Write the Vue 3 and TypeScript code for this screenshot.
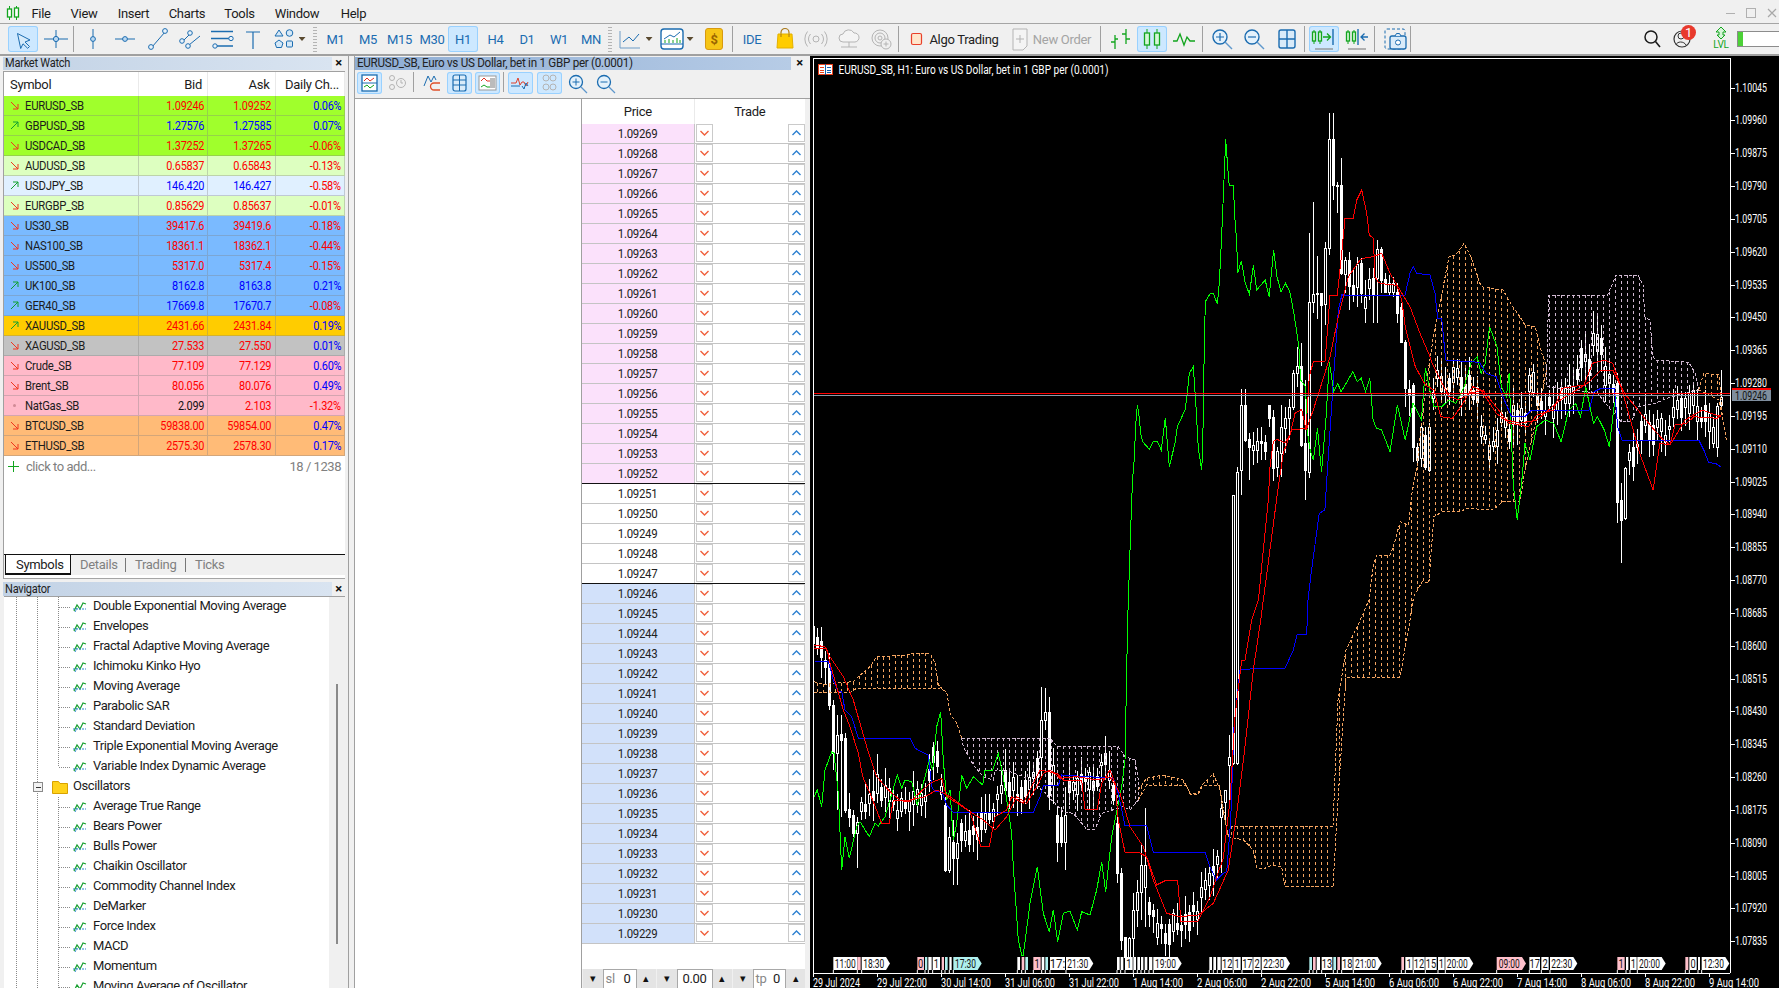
<script setup lang="ts">
type P = number[];
const B = '#1b6cb0';
const G = '#12a51e';
const L = '#b4b4b4';

interface Tool { cx: number; w: number; kind: 'icon' | 'text' | 'sep' | 'grip' | 'drop'; html?: string; text?: string; on?: boolean; cls?: string }
const ic: Record<string, string> = {
  arrow: `<path d="M9.5 7.5L22 14l-5 2 4.5 4.5-1.8 1.8L15 17.8l-2.3 4.7z" fill="#d7ebfa" stroke="${B}"/>`,
  cross: `<path d="M3 13h24M15 4v18" stroke="${B}"/><circle cx="15" cy="13" r="2.6" fill="#bcd9f2" stroke="${B}"/>`,
  vline: `<path d="M15 3v20" stroke="${B}"/><circle cx="15" cy="13" r="2.4" fill="#bcd9f2" stroke="${B}"/>`,
  hline: `<path d="M5 13h20" stroke="${B}"/><circle cx="15" cy="13" r="2.4" fill="#bcd9f2" stroke="${B}"/>`,
  trend: `<path d="M9 21L22 6" stroke="${B}"/><circle cx="8" cy="21" r="2.4" fill="#eaf3fb" stroke="${B}"/><circle cx="22" cy="5" r="2.4" fill="#eaf3fb" stroke="${B}"/>`,
  chan: `<path d="M8 15L16 7M14 19L25 10" stroke="${B}"/><circle cx="7" cy="15" r="2.3" fill="#eaf3fb" stroke="${B}"/><circle cx="15" cy="7" r="2.3" fill="#eaf3fb" stroke="${B}"/><circle cx="13" cy="20" r="2.3" fill="#eaf3fb" stroke="${B}"/>`,
  fibo: `<path d="M4 5.5h22M4 12.5h18M10 20h16" stroke="${B}" stroke-width="1.3"/><circle cx="24" cy="12.5" r="2.2" fill="#eaf3fb" stroke="${B}"/><circle cx="8" cy="20" r="2.2" fill="#eaf3fb" stroke="${B}"/>`,
  tee: `<path d="M8 6h14M15 6v17" stroke="${B}" stroke-width="1.2"/>`,
  shapes: `<path d="M10 4l4 6H6z" fill="#d5e8f7" stroke="${B}"/><circle cx="20.5" cy="7" r="3.3" fill="#d5e8f7" stroke="${B}"/><path d="M10 14l4 3-1.5 4.5h-5L6 17z" fill="#d5e8f7" stroke="${B}"/><rect x="17.5" y="15" width="6" height="6" rx="1" fill="#d5e8f7" stroke="${B}"/>`,
  linec: `<path d="M4 5v17h20" stroke="#6f9cc6"/><path d="M7 16l6-5 4 4 6-7" stroke="${B}"/>`,
  win: `<rect x="4" y="3" width="22" height="20" rx="3" fill="#fff" stroke="${B}" stroke-width="1.4"/><path d="M4 18h22" stroke="${B}"/><path d="M7 13l6-4 4 2 6-5" stroke="${B}"/><path d="M8 17v-3M12 17v-4M16 17v-3M20 17v-5M23 17v-3" stroke="${G}"/>`,
  bag: `<path d="M11 9V6.500a4 4 0 0 1 8 0V9" stroke="#a87818" stroke-width="1.200"/><path d="M8 8h14l1 14H7z" fill="#ffcc00" stroke="#e3b000"/><path d="M11 8v3M19 8v3" stroke="#a87818"/>`,
  sig: `<circle cx="15" cy="13" r="3" stroke="${L}"/><path d="M9.5 8a8 8 0 0 0 0 10M20.500 8a8 8 0 0 1 0 10M6.500 5.500a12 12 0 0 0 0 15M23.500 5.500a12 12 0 0 1 0 15" stroke="${L}"/>`,
  cloud: `<path d="M9 16a4 4 0 0 1 0-8 6 6 0 0 1 11-1 4.500 4.500 0 0 1 1 9z" stroke="${L}" fill="#f4f4f4"/><path d="M15 16v5M7 21h16" stroke="${L}"/>`,
  vps: `<circle cx="14" cy="12" r="8" stroke="${L}"/><circle cx="14" cy="12" r="5" stroke="${L}"/><circle cx="14" cy="12" r="2" stroke="${L}"/><circle cx="20" cy="18" r="5" fill="#f0f0f0" stroke="${L}"/><path d="M17.500 18h5M20 15.500v5" stroke="${L}"/>`,
  algo: `<rect x="2.500" y="7.500" width="10" height="11" rx="1.500" fill="#ffe6cc" stroke="#e9402a" stroke-width="1.200"/>`,
  order: `<path d="M8 3h14v17l-4 4H8z" fill="#f4f4f4" stroke="${L}"/><path d="M15 9v8M11 13h8" stroke="${L}"/>`,
  bars: `<path d="M9 9v14M5 16h4M9 13h3M20 3v15M16 8h4M20 13h4" stroke="${G}" stroke-width="1.300"/>`,
  candles: `<path d="M10 3v20M20 3v20" stroke="${G}"/><rect x="7.500" y="7" width="5" height="12" fill="#d7f5d9" stroke="${G}" stroke-width="1.300"/><rect x="17.500" y="7" width="5" height="12" fill="#d7f5d9" stroke="${G}" stroke-width="1.300"/>`,
  linez: `<path d="M4 15h4l3-7 4 11 3-8 3 4h5" stroke="${G}" stroke-width="1.300"/>`,
  zin: `<circle cx="13" cy="11" r="7" fill="#e4f1fb" stroke="${B}" stroke-width="1.400"/><path d="M9 11h8M13 7v8" stroke="${B}" stroke-width="1.200"/><path d="M18 16l7 7" stroke="#5e97cc" stroke-width="1.400"/>`,
  zout: `<circle cx="13" cy="11" r="7" fill="#e4f1fb" stroke="${B}" stroke-width="1.400"/><path d="M9 11h8" stroke="${B}" stroke-width="1.200"/><path d="M18 16l7 7" stroke="#5e97cc" stroke-width="1.400"/>`,
  tile: `<rect x="7" y="4" width="16" height="18" rx="2" fill="#d9ebf9" stroke="${B}" stroke-width="1.400"/><path d="M15 4v18M7 13h16" stroke="${B}" stroke-width="1.400"/>`,
  auto: `<path d="M5 4v14M11 4v14" stroke="${G}"/><rect x="3.500" y="6" width="3" height="9" fill="#d7f5d9" stroke="${G}" stroke-width="1.300"/><rect x="9.500" y="6" width="3" height="9" fill="#d7f5d9" stroke="${G}" stroke-width="1.300"/><path d="M14 11h7M18 7.500l3.500 3.500-3.500 3.500" stroke="${G}" stroke-width="1.300"/><path d="M24 3v16" stroke="${B}" stroke-width="1.400"/><path d="M6 23h18" stroke="#8f8f8f" stroke-width="1.300"/>`,
  shift: `<path d="M6 4v14M12 4v14" stroke="${G}"/><rect x="4.500" y="6" width="3" height="9" fill="#d7f5d9" stroke="${G}" stroke-width="1.300"/><rect x="10.500" y="6" width="3" height="9" fill="#d7f5d9" stroke="${G}" stroke-width="1.300"/><path d="M16 3v16" stroke="${B}" stroke-width="1.400"/><path d="M26 11h-7M22.500 7.500L19 11l3.500 3.500" stroke="${B}" stroke-width="1.300"/><path d="M6 23h18" stroke="#8f8f8f" stroke-width="1.300"/>`,
  cam: `<rect x="5" y="3" width="20" height="20" rx="2" stroke="${B}" stroke-dasharray="3 2"/><rect x="10" y="10" width="16" height="13" rx="2" fill="#d9ebf9" stroke="${B}" stroke-width="1.300"/><circle cx="18" cy="16.500" r="2.500" fill="#fff" stroke="${B}"/><path d="M15 10l1.500-2.500h3L21 10" fill="#d9ebf9" stroke="${B}"/>`,
  search: `<circle cx="14" cy="11" r="6" stroke="#1a1a1a" stroke-width="1.500"/><path d="M18.500 15.500L23 21" stroke="#1a1a1a" stroke-width="1.600"/>`,
  user: `<circle cx="15" cy="13" r="8" stroke="#333" stroke-width="1.200"/><circle cx="14" cy="10" r="3" stroke="#333"/><path d="M9 19c1-4 8-4 10 0" stroke="#333"/>`,
  lvl: `<path d="M15 1l5 5h-3v3h2l-4 4-4-4h2V6H10z" fill="#d7f5d9" stroke="${G}"/>`,
};

const raw: Tool[] = [
  { cx: 23, w: 30, kind: 'icon', html: ic.arrow, on: true }, { cx: 55.500, w: 30, kind: 'icon', html: ic.cross },
  { cx: 73.500, w: 1, kind: 'sep' }, { cx: 93, w: 30, kind: 'icon', html: ic.vline }, { cx: 125, w: 30, kind: 'icon', html: ic.hline },
  { cx: 158, w: 30, kind: 'icon', html: ic.trend }, { cx: 189.500, w: 30, kind: 'icon', html: ic.chan }, { cx: 222, w: 30, kind: 'icon', html: ic.fibo },
  { cx: 253, w: 30, kind: 'icon', html: ic.tee }, { cx: 284, w: 30, kind: 'icon', html: ic.shapes }, { cx: 302, w: 7, kind: 'drop' }, { cx: 314.500, w: 4, kind: 'grip' },
  { cx: 335.500, w: 30, kind: 'text', text: 'M1' }, { cx: 368, w: 30, kind: 'text', text: 'M5' }, { cx: 399.500, w: 30, kind: 'text', text: 'M15' }, { cx: 432, w: 30, kind: 'text', text: 'M30' },
  { cx: 463, w: 30, kind: 'text', text: 'H1', on: true }, { cx: 495.500, w: 30, kind: 'text', text: 'H4' }, { cx: 527, w: 30, kind: 'text', text: 'D1' }, { cx: 559, w: 30, kind: 'text', text: 'W1' }, { cx: 591, w: 30, kind: 'text', text: 'MN' },
  { cx: 609.500, w: 4, kind: 'grip' }, { cx: 631, w: 30, kind: 'icon', html: ic.linec }, { cx: 649, w: 7, kind: 'drop' }, { cx: 671.500, w: 30, kind: 'icon', html: ic.win }, { cx: 690, w: 7, kind: 'drop' },
  { cx: 714, w: 18, kind: 'text', text: '$', cls: 'dollar' }, { cx: 732.500, w: 1, kind: 'sep' }, { cx: 752, w: 26, kind: 'text', text: 'IDE' }, { cx: 785, w: 30, kind: 'icon', html: ic.bag },
  { cx: 816, w: 30, kind: 'icon', html: ic.sig }, { cx: 849, w: 30, kind: 'icon', html: ic.cloud }, { cx: 881, w: 30, kind: 'icon', html: ic.vps }, { cx: 898.500, w: 1, kind: 'sep' },
  { cx: 916.500, w: 15, kind: 'icon', html: ic.algo }, { cx: 964, w: 70, kind: 'text', text: 'Algo Trading', cls: 'label' },
  { cx: 1020, w: 30, kind: 'icon', html: ic.order }, { cx: 1062, w: 58, kind: 'text', text: 'New Order', cls: 'label off' }, { cx: 1100.500, w: 1, kind: 'sep' },
  { cx: 1120.500, w: 30, kind: 'icon', html: ic.bars }, { cx: 1152, w: 30, kind: 'icon', html: ic.candles, on: true }, { cx: 1184, w: 30, kind: 'icon', html: ic.linez }, { cx: 1202, w: 1, kind: 'sep' },
  { cx: 1222, w: 30, kind: 'icon', html: ic.zin }, { cx: 1254, w: 30, kind: 'icon', html: ic.zout }, { cx: 1287, w: 30, kind: 'icon', html: ic.tile }, { cx: 1304, w: 1, kind: 'sep' },
  { cx: 1324, w: 30, kind: 'icon', html: ic.auto, on: true }, { cx: 1357, w: 30, kind: 'icon', html: ic.shift }, { cx: 1374, w: 1, kind: 'sep' }, { cx: 1395, w: 30, kind: 'icon', html: ic.cam }, { cx: 1410.500, w: 1, kind: 'sep' },
  { cx: 1652, w: 30, kind: 'icon', html: ic.search },
];
let edge = 0;
const tools = raw.map((t) => { const ml = t.cx - t.w / 2 - edge; edge = t.cx + t.w / 2; return { ...t, ml }; });

const menus = [['File', 41], ['View', 84], ['Insert', 133.5], ['Charts', 187], ['Tools', 239.5], ['Window', 297], ['Help', 353.5]] as const;
const menuItems = (() => { let e = 21; return menus.map(([t, c]) => { const w = 50; const ml = c - w / 2 - e; e = c + w / 2; return { t, w, ml }; }); })();

const subTools = [
  { w: 25, on: true, html: `<rect x="5" y="3" width="15" height="16" fill="#fff" stroke="${B}" stroke-width="1.300"/><path d="M5 11h15" stroke="${B}"/><path d="M7 9l3-3 3 3 4-3" stroke="#e03020"/><path d="M7 15l3-2 3 3 4-3" stroke="${G}"/>` },
  { w: 25, m: 3, html: `<circle cx="7" cy="6" r="2.500" stroke="${L}"/><circle cx="7" cy="15" r="2.500" stroke="${L}"/><circle cx="16" cy="11" r="4.500" stroke="${L}"/><path d="M16 8v3h2" stroke="${L}"/>` },
  { w: 1, sep: true, m: 3 },
  { w: 25, m: 6, html: `<path d="M4 14l4-10 3 6 3-6 2 4" stroke="${B}"/><path d="M20 11h-6a3.500 3.500 0 0 0 0 7h6" stroke="#e0502a" stroke-width="1.300"/>` },
  { w: 25, m: 2, on: true, html: `<rect x="6" y="3" width="13" height="16" rx="2" fill="#d9ebf9" stroke="${B}" stroke-width="1.200"/><path d="M6 8h13M6 13h13M12.500 3v16" stroke="${B}"/>` },
  { w: 25, m: 3, on: true, html: `<rect x="4" y="4" width="17" height="14" fill="#fff" stroke="#999"/><path d="M6 9l3-3 3 3h3" stroke="#e03020"/><path d="M6 15l3-2 3 2h3" stroke="${G}"/><rect x="15" y="6" width="5" height="10" fill="#bbb"/>` },
  { w: 1, sep: true, m: 3 },
  { w: 25, m: 4, on: true, html: `<path d="M3 11h5l2-5 2 7 2-3h2l2 4 2-4" stroke="#e0402a"/><path d="M3 14h9M14 14l2 3 2-6 2 3" stroke="${B}"/>` },
  { w: 25, m: 4, on: true, html: `<circle cx="9" cy="6" r="3" stroke="${L}"/><circle cx="9" cy="15" r="3" stroke="${L}"/><circle cx="16" cy="6" r="3" stroke="${L}"/><circle cx="16" cy="15" r="3" stroke="${L}"/>` },
  { w: 25, m: 3, html: `<circle cx="11" cy="10" r="6.500" fill="#e4f1fb" stroke="${B}" stroke-width="1.300"/><path d="M7.500 10h7M11 6.500v7" stroke="${B}"/><path d="M16 15l6 6" stroke="#5e97cc" stroke-width="1.300"/>` },
  { w: 25, m: 3, html: `<circle cx="11" cy="10" r="6.500" fill="#e4f1fb" stroke="${B}" stroke-width="1.300"/><path d="M7.500 10h7" stroke="${B}"/><path d="M16 15l6 6" stroke="#5e97cc" stroke-width="1.300"/>` },
];

const RED = '#ff0000', BLU = '#0000ff', BLK = '#111';
const GRN = '#a0ff2c', PGR = '#ddffc0', PBL = '#e0f0ff', SKY = '#7abaff', GLD = '#ffcc00', GRY = '#c2c2c2', PNK = '#ffb9c9', ORG = '#ffbb77';
const rows = [
  ['EURUSD_SB', 'd', '1.09246', '1.09252', '0.06%', GRN, RED, RED],
  ['GBPUSD_SB', 'u', '1.27576', '1.27585', '0.07%', GRN, BLU, BLU],
  ['USDCAD_SB', 'd', '1.37252', '1.37265', '-0.06%', GRN, RED, RED],
  ['AUDUSD_SB', 'd', '0.65837', '0.65843', '-0.13%', PGR, RED, RED],
  ['USDJPY_SB', 'u', '146.420', '146.427', '-0.58%', PBL, BLU, BLU],
  ['EURGBP_SB', 'd', '0.85629', '0.85637', '-0.01%', PGR, RED, RED],
  ['US30_SB', 'd', '39417.6', '39419.6', '-0.18%', SKY, RED, RED],
  ['NAS100_SB', 'd', '18361.1', '18362.1', '-0.44%', SKY, RED, RED],
  ['US500_SB', 'd', '5317.0', '5317.4', '-0.15%', SKY, RED, RED],
  ['UK100_SB', 'u', '8162.8', '8163.8', '0.21%', SKY, BLU, BLU],
  ['GER40_SB', 'u', '17669.8', '17670.7', '-0.08%', SKY, BLU, BLU],
  ['XAUUSD_SB', 'u', '2431.66', '2431.84', '0.19%', GLD, RED, RED],
  ['XAGUSD_SB', 'd', '27.533', '27.550', '0.01%', GRY, RED, RED],
  ['Crude_SB', 'd', '77.109', '77.129', '0.60%', PNK, RED, RED],
  ['Brent_SB', 'd', '80.056', '80.076', '0.49%', PNK, RED, RED],
  ['NatGas_SB', 'n', '2.099', '2.103', '-1.32%', PNK, BLK, RED],
  ['BTCUSD_SB', 'd', '59838.00', '59854.00', '0.47%', ORG, RED, RED],
  ['ETHUSD_SB', 'd', '2575.30', '2578.30', '0.17%', ORG, RED, RED],
].map((r) => ({ sym: r[0], dir: r[1], bid: r[2], ask: r[3], chg: r[4], bg: r[5], bc: r[6], ac: r[7], cc: r[4].startsWith('-') ? RED : BLU }));

const navTop = ['Double Exponential Moving Average', 'Envelopes', 'Fractal Adaptive Moving Average', 'Ichimoku Kinko Hyo', 'Moving Average', 'Parabolic SAR', 'Standard Deviation', 'Triple Exponential Moving Average', 'Variable Index Dynamic Average'];
const navOsc = ['Average True Range', 'Bears Power', 'Bulls Power', 'Chaikin Oscillator', 'Commodity Channel Index', 'DeMarker', 'Force Index', 'MACD', 'Momentum', 'Moving Average of Oscillator'];

const domRows = Array.from({ length: 41 }, (_, i) => ({
  price: (1.09269 - i * 0.00001).toFixed(5),
  cls: i < 18 ? 'ask' : i < 23 ? 'mid' : 'bid',
  sep: i === 17 || i === 22,
}));

// ---------- chart data ----------
const zoomMap = (ox: number, oy: number, fx: number) => (pts: P[]): P[] => pts.map(([x, y]) => [ox + x / fx, oy + y / 3]);
const z7 = zoomMap(810, 620, 3), z8 = zoomMap(1200, 60, 3), z6 = zoomMap(1250, 200, 2.964), z10 = zoomMap(1100, 120, 3);
const d = (p: P[]) => 'M' + p.map((q) => q[0].toFixed(1) + ' ' + q[1].toFixed(1)).join('L');

const green = d([
  ...z7([[12, 530], [22, 510], [35, 560], [45, 450], [65, 395], [72, 400], [85, 520], [95, 750], [105, 650], [118, 715], [140, 620], [150, 605], [178, 650], [195, 610], [205, 618], [225, 590], [240, 540], [262, 465], [275, 505], [285, 480], [305, 485], [322, 555], [340, 490], [358, 420], [368, 450], [380, 320], [392, 275], [400, 420], [410, 540], [420, 510], [430, 660], [440, 610], [455, 465], [470, 505], [490, 470], [518, 495], [525, 450], [548, 450], [565, 400], [580, 470], [605, 640], [610, 740], [625, 960], [635, 1005], [640, 1005], [660, 850], [682, 740], [700, 880], [718, 935], [730, 870], [743, 965], [760, 880], [780, 873], [802, 930], [815, 875], [840, 885], [860, 810], [875, 725], [887, 815], [905, 650], [935, 500], [945, 420], [950, 150], [953, 0]]),
  ...z10([[95, 1140], [98, 1075], [104, 1000], [106, 930], [112, 855], [116, 880], [122, 940], [128, 965], [148, 988], [160, 965], [172, 965], [184, 990], [196, 893], [200, 945], [208, 1040], [225, 970], [232, 920], [255, 870], [262, 820], [268, 760], [280, 740], [288, 860], [295, 985], [305, 1050], [308, 985], [312, 735], [316, 545], [330, 522], [340, 520], [352, 552], [358, 490], [365, 345], [372, 180], [377, 58], [380, 100], [386, 180], [388, 195], [400, 195], [405, 300], [410, 365], [413, 460], [424, 422], [436, 490], [448, 522]]),
  ...z6([[0, 270], [10, 195], [20, 270], [45, 240], [57, 290], [70, 150], [80, 230], [92, 275], [105, 250], [118, 275], [130, 340], [145, 440], [150, 540], [165, 560], [168, 680], [178, 750], [188, 780], [200, 685], [212, 815], [225, 660], [235, 485], [248, 575], [260, 550], [270, 575], [305, 515], [318, 545], [330, 535], [342, 575], [355, 535], [365, 660], [375, 685], [390, 690], [415, 755], [437, 615], [460, 720], [483, 610], [508, 660], [520, 505], [535, 580], [545, 620], [568, 620], [590, 600], [610, 610], [635, 560], [655, 490], [673, 470], [685, 520], [697, 490], [710, 380], [732, 440], [745, 560], [760, 590], [768, 520], [780, 850], [792, 960], [805, 850], [815, 730], [830, 780], [850, 680], [875, 660], [900, 670], [922, 725], [945, 630], [965, 610], [980, 650], [995, 560], [1018, 670], [1030, 650], [1050, 690], [1065, 740], [1080, 610], [1088, 590]]),
]);
const redA = d([
  ...z7([[12, 85], [50, 85], [60, 130], [100, 270], [120, 320], [145, 400], [158, 470], [180, 520], [215, 610], [238, 610], [250, 540], [300, 545], [360, 490], [395, 475], [410, 530], [450, 555], [480, 575], [500, 640], [513, 680], [538, 680], [555, 590], [590, 570], [605, 530], [640, 550], [690, 450], [740, 460], [760, 480], [815, 480], [825, 568], [862, 568], [875, 490], [900, 450], [915, 490], [925, 600], [945, 697], [985, 697], [1010, 710], [1040, 795], [1065, 782], [1103, 782], [1113, 905], [1163, 905], [1200, 830], [1220, 770], [1240, 715], [1260, 540], [1275, 290], [1295, 120], [1305, 120], [1325, 0]]),
  ...z6([[25, 1200]]),
  ...z10([[505, 1140], [510, 1040], [520, 965], [530, 958], [555, 968], [570, 945], [585, 880], [605, 868], [618, 930], [628, 770], [640, 725], [675, 725], [685, 600], [690, 525], [712, 525], [725, 400], [735, 295], [760, 295]]),
  ...z8([[470, 420], [485, 390], [500, 460], [508, 525], [520, 535], [525, 650], [535, 668], [555, 672], [590, 676]]),
  ...z6([[450, 300], [460, 380], [490, 500], [520, 555], [545, 570], [565, 650], [600, 655], [625, 620], [660, 560], [685, 570], [730, 640], [770, 670], [825, 680], [850, 645], [900, 630], [925, 565], [990, 555], [1015, 490], [1050, 480], [1075, 490], [1100, 560], [1155, 760], [1195, 870], [1215, 730], [1245, 735], [1260, 675], [1295, 670], [1315, 650], [1385, 655], [1395, 645]]),
]);
const redB = d([
  ...z7([[12, 75], [45, 80], [60, 110], [100, 170], [130, 240], [170, 380], [200, 470], [240, 515], [270, 540], [300, 540], [345, 530], [380, 510], [420, 530], [480, 575], [520, 600], [555, 630], [590, 590], [620, 530], [650, 550], [680, 500], [700, 460], [720, 450], [750, 475], [800, 470], [860, 480], [900, 470], [930, 520], [960, 620], [1000, 680], [1030, 780], [1070, 880], [1110, 890], [1165, 885], [1210, 850], [1255, 750], [1280, 580], [1305, 380], [1330, 150], [1352, 0]]),
  ...z10([[535, 1100], [550, 1000], [575, 930], [620, 925], [640, 870], [665, 790], [690, 710], [715, 590], [745, 470]]),
  ...z8([[480, 600], [490, 595], [520, 590], [545, 580], [570, 640], [600, 690], [630, 740], [660, 820], [690, 890]]),
  ...z6([[540, 490], [590, 590], [620, 600], [650, 580], [690, 570], [760, 660], [800, 670], [850, 660], [920, 600], [1000, 550], [1040, 510], [1075, 510], [1110, 580], [1150, 630], [1190, 680], [1220, 715], [1245, 735], [1290, 660], [1340, 630], [1395, 650]]),
]);
const blue = d([
  ...z7([[15, 123], [55, 123], [70, 180], [85, 215], [95, 215], [105, 270], [125, 290], [145, 355], [300, 355], [315, 385], [355, 405], [365, 500], [375, 515], [395, 515], [410, 555], [430, 577], [670, 577], [690, 530], [700, 497], [745, 497], [755, 465], [910, 475], [925, 520], [945, 617], [1010, 617], [1030, 697], [1185, 697], [1200, 740], [1220, 780], [1240, 760], [1250, 755], [1262, 600], [1272, 320], [1290, 150], [1340, 145], [1425, 145], [1450, 90], [1462, 43], [1490, 43]]),
  ...z6([[172, 1200], [180, 1130], [205, 940], [222, 930], [230, 800], [250, 500], [262, 330], [272, 285]]),
  ...z8([[615, 706], [630, 640], [640, 620], [650, 640], [690, 645], [705, 700], [713, 775], [725, 775], [737, 900]]),
  ...z6([[680, 487], [700, 520], [730, 530], [750, 590], [775, 650], [815, 650], [835, 630], [1005, 630], [1020, 575], [1040, 565], [1080, 565], [1090, 680], [1103, 720], [1330, 720], [1345, 750], [1360, 788], [1380, 790], [1395, 800]]),
]);

const interp = (p: P[], x: number) => {
  if (x <= p[0][0]) return p[0][1];
  for (let i = 1; i < p.length; i++) if (x <= p[i][0]) {
    const a = p[i - 1], b = p[i];
    return a[1] + (b[1] - a[1]) * (x - a[0]) / Math.max(b[0] - a[0], 0.001);
  }
  return p[p.length - 1][1];
};
const ORANGE = '#f4a460', THIS = '#d0b8d0';
const cloud = (top: P[], bot: P[], color: string) => {
  let cols = '';
  const x0 = Math.max(top[0][0], bot[0][0]), x1 = Math.min(top[top.length - 1][0], bot[bot.length - 1][0]);
  for (let x = Math.ceil(x0 / 6) * 6 + 1; x < x1; x += 6) {
    const a = interp(top, x), b = interp(bot, x);
    if (b - a > 3) cols += `M${x} ${a.toFixed(1)}V${b.toFixed(1)}`;
  }
  return { color, cols, edge: d(top) + d(bot) };
};
const clouds = [
  cloud(z7([[12, 185], [50, 195], [60, 190], [130, 185], [145, 170], [180, 140], [200, 110], [240, 110], [250, 105], [290, 105], [310, 100], [360, 100], [375, 130], [385, 195], [400, 210]]), z7([[12, 218], [120, 218], [140, 205], [385, 205], [400, 210]]), ORANGE),
  cloud(z7([[400, 210], [410, 215], [420, 280], [440, 310], [455, 355]]), z7([[400, 210], [410, 215], [420, 280], [440, 310], [455, 355]]), ORANGE),
  cloud(z7([[455, 355], [720, 355], [740, 378], [925, 380], [945, 410], [975, 420], [985, 480], [985, 540]]), z7([[455, 355], [460, 380], [490, 435], [520, 470], [550, 480], [555, 450], [600, 455], [640, 470], [680, 495], [735, 550], [760, 575], [790, 580], [815, 610], [830, 628], [855, 628], [875, 580], [940, 560], [960, 570], [985, 540]]), THIS),
  cloud(z7([[985, 510], [1010, 475], [1060, 465], [1120, 480], [1140, 520], [1165, 520], [1175, 495], [1210, 462], [1230, 510], [1240, 580], [1255, 650]]), z7([[985, 540], [1010, 495], [1130, 497], [1140, 522], [1165, 522], [1178, 497], [1228, 497], [1255, 650]]), ORANGE),
  cloud(z7([[1255, 650], [1262, 618], [1569, 618]]), z7([[1255, 650], [1300, 660], [1330, 690], [1340, 745], [1365, 745], [1385, 735], [1415, 740], [1425, 800], [1569, 800]]), ORANGE),
  cloud([[1333, 826], [1338, 700], [1346, 650], [1358, 625], [1369, 600], ...z6([[365, 1100], [375, 1065], [415, 1065], [425, 1040], [445, 965], [470, 975], [480, 880], [495, 800], [510, 650], [530, 500], [545, 400], [565, 300], [590, 170], [610, 165], [635, 130], [655, 170], [685, 260], [750, 270], [775, 315], [800, 350], [815, 375], [845, 380], [865, 460], [880, 500]])],
    [[1333, 886], [1338, 800], [1346, 677], [1400, 677], [1410, 620], ...z6([[485, 1190], [510, 1145], [530, 1150], [545, 950], [570, 935], [625, 935], [640, 925], [720, 930], [750, 905], [800, 905], [815, 810], [870, 560], [880, 500]])], ORANGE),
  cloud(z6([[880, 500], [885, 285], [1060, 285], [1085, 225], [1150, 225], [1165, 255], [1170, 350], [1185, 360], [1195, 470], [1200, 480], [1300, 487], [1320, 520], [1330, 570]]), z6([[880, 500], [880, 560], [1030, 580], [1070, 630], [1100, 665], [1130, 665], [1150, 620], [1200, 610], [1250, 590], [1330, 570]]), THIS),
  cloud(z6([[1330, 570], [1345, 520], [1390, 525], [1395, 580], [1400, 650], [1412, 720]]), z6([[1330, 570], [1390, 600], [1400, 650], [1412, 720]]), ORANGE),
];

// candles: X, high, low, top, bottom, filled
type C = [number, number, number, number, number, number];
const snap = (x: number) => Math.round((x - 1) / 4) * 4 + 1;
const fromZ = (m: (p: P[]) => P[], list: number[][]): C[] => list.map(([x, hi, lo, t, b, f]) => {
  const [[X, H], [, Lo], [, T], [, Bo]] = m([[x, hi], [x, lo], [x, t], [x, b]]);
  return [snap(X), H, Lo, T, Bo, f];
});
const explicit: C[] = [
  ...fromZ(z7, [[21, 25, 105, 50, 85, 1], [57, 100, 270, 130, 255, 1], [69, 240, 450, 255, 400, 1], [81, 285, 570, 345, 400, 0], [93, 285, 590, 342, 360, 1], [105, 340, 580, 355, 570, 1], [117, 520, 620, 568, 590, 1], [129, 570, 650, 585, 640, 1], [141, 590, 745, 605, 640, 0],
    [405, 530, 755, 555, 750, 1], [417, 620, 760, 650, 750, 0], [429, 600, 795, 665, 715, 1], [441, 640, 795, 670, 715, 0],
    [693, 200, 470, 300, 410, 0], [705, 205, 330, 275, 300, 0], [717, 230, 570, 275, 525, 1],
    [741, 560, 725, 585, 665, 1], [753, 560, 680, 590, 665, 1], [765, 500, 750, 585, 665, 0],
    [921, 580, 790, 610, 760, 1], [933, 745, 990, 760, 960, 1], [945, 950, 1030, 950, 1010, 1], [957, 950, 1030, 955, 1010, 0], [969, 820, 1010, 870, 955, 0], [981, 780, 920, 815, 870, 0], [993, 675, 900, 735, 815, 0], [1005, 565, 920, 735, 800, 0],
    [1233, 540, 760, 565, 590, 0], [1245, 510, 600, 510, 545, 0], [1257, 345, 540, 410, 435, 0], [1269, -375, 435, -375, 430, 0]]),
  ...fromZ(z10, [[412, 1040, 1935, 1055, 1930, 0], [424, 808, 1125, 855, 1050, 0], [436, 808, 965, 855, 960, 1], [448, 940, 1080, 958, 980, 1], [460, 935, 1035, 975, 990, 0], [472, 925, 1030, 964, 990, 0], [484, 920, 1020, 963, 968, 1], [496, 945, 1020, 965, 992, 1], [508, 855, 920, 855, 893, 1], [520, 870, 1082, 890, 1045, 1], [532, 982, 1070, 992, 1042, 0], [544, 855, 1070, 920, 1000, 0], [556, 860, 1000, 895, 925, 0], [568, 838, 960, 862, 895, 0], [580, 750, 870, 760, 862, 0], [592, 680, 800, 738, 760, 0], [604, 670, 980, 738, 975, 1], [616, 780, 1140, 970, 1050, 1], [628, 340, 1075, 545, 1055, 0], [640, 247, 580, 522, 545, 0], [652, 408, 598, 518, 522, 1], [664, 520, 738, 520, 555, 1], [676, 365, 615, 385, 552, 0], [688, -20, 405, 58, 385, 0], [700, -20, 240, 58, 195, 1], [712, 185, 280, 194, 197, 1], [724, 115, 465, 195, 460, 1], [736, 410, 520, 420, 463, 0], [748, 395, 570, 420, 498, 1], [760, 450, 545, 495, 525, 1]]),
  ...fromZ(z8, [[472, 590, 740, 612, 680, 0], [484, 595, 730, 610, 700, 1], [496, 660, 790, 712, 745, 0], [508, 625, 720, 658, 685, 0], [520, 625, 790, 655, 705, 1], [532, 540, 790, 567, 655, 0], [544, 560, 700, 567, 660, 1], [556, 640, 700, 657, 695, 1], [568, 645, 705, 670, 695, 0], [580, 650, 710, 668, 695, 0], [592, 670, 790, 695, 760, 1], [604, 730, 850, 740, 845, 1], [616, 820, 900, 843, 900, 1]]),
  ...fromZ(z6, [[460, 420, 620, 425, 565, 1], [485, 550, 785, 555, 740, 1], [497, 730, 790, 740, 780, 1], [510, 675, 800, 680, 775, 0], [520, 680, 810, 705, 800, 1], [532, 670, 815, 680, 810, 0],
    [1090, 520, 970, 550, 905, 1], [1102, 850, 1090, 900, 960, 1], [1114, 800, 960, 805, 955, 0], [1385, 610, 770, 617, 740, 0], [1397, 510, 620, 590, 615, 0]]),
];
const mid: P[] = [
  ...z7([[15, 60], [50, 150], [60, 230], [75, 330], [105, 450], [120, 570], [135, 610], [160, 560], [180, 510], [210, 510], [240, 530], [265, 570], [290, 565], [320, 520], [350, 530], [365, 430], [385, 390], [405, 640], [430, 690], [455, 640], [490, 630], [520, 610], [550, 580], [575, 500], [600, 490], [630, 530], [660, 480], [690, 420], [715, 400], [735, 520], [750, 620], [770, 530], [800, 490], [830, 490], [860, 480], [885, 420], [910, 520], [925, 680], [935, 860], [950, 980], [970, 880], [990, 820], [1005, 800], [1020, 880], [1040, 920], [1060, 940], [1090, 910], [1130, 900], [1165, 860], [1190, 770], [1220, 720], [1240, 540]]),
  ...z6([[438, 310], [450, 370], [460, 490], [472, 590], [483, 680], [495, 760], [510, 750], [530, 760], [545, 550], [555, 520], [565, 570], [580, 570], [590, 560], [605, 530], [615, 520], [627, 570], [650, 550], [672, 580], [685, 680], [697, 720], [712, 740], [735, 730], [745, 660], [770, 690], [780, 650], [792, 640], [805, 620], [818, 640], [828, 560], [840, 550], [852, 610], [875, 620], [890, 610], [910, 620], [925, 590], [945, 570], [960, 550], [970, 510], [980, 480], [995, 490], [1005, 490], [1020, 410], [1040, 430], [1052, 510], [1075, 540], [1090, 760], [1125, 760], [1138, 750], [1150, 740], [1160, 680], [1175, 680], [1195, 710], [1207, 680], [1220, 680], [1232, 710], [1245, 690], [1255, 650], [1268, 620], [1280, 640], [1303, 590], [1315, 610], [1327, 650], [1350, 660], [1362, 680], [1372, 720]]),
];
let seed = 12345;
const rnd = () => { seed = (seed * 16807) % 2147483647; return seed / 2147483647; };
const map = new Map<number, C>(explicit.map((c) => [c[0], c]));
for (let X = 813; X <= 1721; X += 4) {
  if (map.has(X) || (X > 1226 && X < 1408)) continue;
  const m = interp(mid, X) + (rnd() - 0.5) * 14;
  const h = 3 + rnd() * 17;
  map.set(X, [X, m - h / 2 - 4 - rnd() * 18, m + h / 2 + 4 + rnd() * 18, m - h / 2, m + h / 2, rnd() > 0.55 ? 1 : 0]);
}
let wicks = '', solid = '', hollow = '';
map.forEach(([X, hi, lo, t, b, f]) => {
  wicks += `M${X + 0.5} ${hi.toFixed(0)}V${lo.toFixed(0)}`;
  const body = `M${X - 0.5} ${Math.round(t) + 0.5}h2V${Math.round(Math.max(b, t + 1)) + 0.5}h-2z`;
  if (f) solid += body; else hollow += body;
});

const yLabels = ['1.10045', '1.09960', '1.09875', '1.09790', '1.09705', '1.09620', '1.09535', '1.09450', '1.09365', '1.09280', '1.09195', '1.09110', '1.09025', '1.08940', '1.08855', '1.08770', '1.08685', '1.08600', '1.08515', '1.08430', '1.08345', '1.08260', '1.08175', '1.08090', '1.08005', '1.07920', '1.07835'].map((t, i) => ({ t, y: Math.round(87.6 + i * 32.83) }));
const xLabels = ['29 Jul 2024', '29 Jul 22:00', '30 Jul 14:00', '31 Jul 06:00', '31 Jul 22:00', '1 Aug 14:00', '2 Aug 06:00', '2 Aug 22:00', '5 Aug 14:00', '6 Aug 06:00', '6 Aug 22:00', '7 Aug 14:00', '8 Aug 06:00', '8 Aug 22:00', '9 Aug 14:00'].map((t, i) => ({ t, x: 813 + i * 64, w: t === '29 Jul 2024' ? 47 : 50 }));

const W = '#ffffff', Pk = '#ffc0cb', Cy = '#aff0ee';
const tagsRaw: [number, number, string, string, boolean][] = [
  [70, 142, W, '11:00', false], [142, 152, Pk, '', false], [155, 240, W, '18:30', true],
  [322, 342, Pk, '0', false], [345, 352, Cy, '', false], [355, 365, W, '', false], [368, 390, W, '1', false], [395, 402, Pk, '', false], [405, 413, Cy, '', false], [418, 425, W, '', false], [430, 515, Cy, '17:30', true],
  [622, 630, W, '', false], [635, 643, Pk, '', false], [646, 654, Cy, '', false], [670, 692, Pk, '1', false], [695, 703, W, '', false], [706, 714, Cy, '', false], [720, 765, W, '17:', false], [768, 850, W, '21:30', true],
  [921, 929, W, '', false], [932, 940, W, '', false], [945, 968, W, '1', false], [970, 978, W, '', false], [982, 990, W, '', false], [993, 1000, W, '', false], [1004, 1012, W, '', false], [1017, 1027, W, '', false], [1030, 1115, W, '19:00', true],
  [1198, 1206, W, '', false], [1210, 1218, W, '', false], [1222, 1232, W, '', false], [1235, 1268, W, '12', false], [1270, 1292, W, '1', false], [1296, 1328, W, '17', false], [1330, 1352, W, '2', false], [1355, 1440, W, '22:30', true],
];
const tagsRaw2: [number, number, string, string, boolean][] = [
  [28, 36, Cy, '', false], [39, 47, Pk, '', false], [50, 60, W, '', false], [65, 97, W, '13', false], [100, 108, Cy, '', false], [112, 120, Pk, '', false], [125, 158, W, '18', false], [160, 245, W, '21:00', true],
  [304, 312, Pk, '', false], [316, 338, W, '1', false], [340, 374, W, '12', false], [376, 410, W, '15', false], [414, 434, W, '1', false], [436, 520, W, '20:00', true],
  [590, 678, Pk, '09:00', true], [688, 720, W, '17', false], [724, 746, W, '2', false], [750, 832, W, '22:30', true],
  [952, 974, Pk, '1', false], [978, 985, W, '', false], [990, 1010, W, '1', false], [1012, 1097, W, '20:00', true],
  [1156, 1165, Pk, '', false], [1168, 1190, W, '0', false], [1194, 1200, W, '', false], [1205, 1288, W, '12:30', true],
];
const mkTag = (ox: number) => ([a, b, c, t, ar]: [number, number, string, string, boolean]) => {
  const x1 = ox + a / 3, x2 = ox + b / 3;
  return { x1, c, t, cx: ar ? (x1 + x2 - 4) / 2 : (x1 + x2) / 2, tl: t.length > 3 ? 21 : t.length * 5.2,
    path: ar ? `M${x1} 957H${x2 - 4}L${x2} 963.5L${x2 - 4} 970H${x1}Z` : `M${x1} 957H${x2}V970H${x1}Z` };
};
const tags = [...tagsRaw.map(mkTag(810)), ...tagsRaw2.map(mkTag(1300))];

const ticks = yLabels.reduce((s, l) => s + `M1730 ${l.y}h5`, '') + xLabels.reduce((s, l) => s + `M${l.x} 973v4`, '');
</script>

<template>
  <div class="app">
    <div class="menubar">
      <svg class="logo" viewBox="0 0 16 16" width="16" height="16"><path d="M4.500 1v14M11.500 1v14" stroke="#12a51e"/><rect x="2.500" y="4" width="4" height="8" fill="#fff" stroke="#12a51e" stroke-width="1.300"/><rect x="9.500" y="3" width="4" height="9" fill="#fff" stroke="#12a51e" stroke-width="1.300"/></svg>
      <span v-for="m in menuItems" :key="m.t" class="menu" :style="{ width: m.w + 'px', marginLeft: m.ml + 'px' }">{{ m.t }}</span>
      <div class="winctl">
        <span class="wmin"></span>
        <span class="wres"></span>
        <svg viewBox="0 0 10 10" width="10" height="10"><path d="M1 1l8 8M9 1l-8 8" stroke="#a8a8a8" stroke-width="1.200"/></svg>
      </div>
    </div>

    <div class="toolbar">
      <template v-for="(t, i) in tools" :key="i">
        <span v-if="t.kind === 'sep'" class="sep" :style="{ marginLeft: t.ml + 'px' }"></span>
        <span v-else-if="t.kind === 'grip'" class="grip" :style="{ marginLeft: t.ml + 'px' }"></span>
        <span v-else-if="t.kind === 'drop'" class="drop" :style="{ marginLeft: t.ml + 'px' }"></span>
        <span v-else-if="t.kind === 'text'" class="tool txt" :class="[t.cls, { on: t.on }]" :style="{ width: t.w + 'px', marginLeft: t.ml + 'px' }">{{ t.text }}</span>
        <span v-else class="tool" :class="{ on: t.on }" :style="{ width: t.w + 'px', marginLeft: t.ml + 'px' }">
          <svg :width="t.w" height="26" :viewBox="`0 0 ${t.w} 26`" fill="none" v-html="t.html"></svg>
        </span>
      </template>
      <div class="tool-right">
        <span class="userbox">
          <svg width="30" height="26" viewBox="0 0 30 26" fill="none" v-html="ic.user"></svg>
          <b class="badge">1</b>
        </span>
        <span class="lvl">
          <svg width="30" height="14" viewBox="0 0 30 14" fill="none" v-html="ic.lvl"></svg>
          <em>LVL</em>
        </span>
        <span class="prog"><i></i></span>
      </div>
    </div>

    <div class="main">
      <aside class="left">
        <div class="title pale"><span class="sq">Market Watch</span><span class="x">×</span></div>
        <div class="mw">
          <div class="row head">
            <span class="sym hsym">Symbol</span><span class="num">Bid</span><span class="num">Ask</span><span class="num hdc">Daily Ch...</span>
          </div>
          <div v-for="r in rows" :key="r.sym" class="row data" :style="{ background: r.bg }">
            <span class="sym">
              <svg class="dir" width="9" height="9" viewBox="0 0 9 9" fill="none">
                <path v-if="r.dir === 'd'" d="M1 1l7 7M8 3v5H3" stroke="#f0341e"/>
                <path v-else-if="r.dir === 'u'" d="M1 8l7-7M3 1h5v5" stroke="#10a030"/>
                <circle v-else cx="4.500" cy="4.500" r="1.500" fill="#d08a96"/>
              </svg><span class="sq sy">{{ r.sym }}</span>
            </span>
            <span class="num"><span class="sq dg" :style="{ color: r.bc }">{{ r.bid }}</span></span>
            <span class="num"><span class="sq dg" :style="{ color: r.ac }">{{ r.ask }}</span></span>
            <span class="num"><span class="sq dg" :style="{ color: r.cc }">{{ r.chg }}</span></span>
          </div>
          <div class="addrow">
            <svg width="11" height="11" viewBox="0 0 11 11"><path d="M5.500 0v11M0 5.500h11" stroke="#12a51e"/></svg>
            <span class="add">click to add...</span><span class="count">18 / 1238</span>
          </div>
          <div class="fill"></div>
          <div class="tabs">
            <span class="tab active">Symbols</span>
            <span class="tab t2">Details</span>
            <span class="tab t3">Trading</span>
            <span class="tab t4">Ticks</span>
          </div>
        </div>
        <div class="title pale nav"><span class="sq">Navigator</span><span class="x">×</span></div>
        <div class="navbox">
          <div class="tree">
            <div v-for="(n, i) in navTop" :key="n" class="leaf" :class="{ last: i === navTop.length - 1 }">
              <svg class="ind" width="14" height="12" viewBox="0 0 14 12" fill="none"><path d="M1 10l3-6 3 4 3-6 3 1" stroke="#18a030" stroke-width="1.200"/><path d="M0 8h13M2 11l2-4" stroke="#2a86c8" stroke-dasharray="2 1"/></svg>
              <span class="lt">{{ n }}</span>
            </div>
            <div class="folder">
              <span class="minus"></span>
              <svg width="16" height="13" viewBox="0 0 16 13"><path d="M.5 12.500V.5h6l1.500 2h7.500v10z" fill="#ffd21a" stroke="#d8a200"/></svg>
              <span class="ftext lt">Oscillators</span>
            </div>
            <div v-for="n in navOsc" :key="n" class="leaf">
              <svg class="ind" width="14" height="12" viewBox="0 0 14 12" fill="none"><path d="M1 10l3-6 3 4 3-6 3 1" stroke="#18a030" stroke-width="1.200"/><path d="M0 8h13M2 11l2-4" stroke="#2a86c8" stroke-dasharray="2 1"/></svg>
              <span class="lt">{{ n }}</span>
            </div>
          </div>
          <div class="scroll"><i></i></div>
        </div>
      </aside>

      <section class="center">
        <div class="title deep"><span class="sq ct">EURUSD_SB, Euro vs US Dollar, bet in 1 GBP per (0.0001)</span><span class="x">×</span></div>
        <div class="subbar">
          <template v-for="(s, i) in subTools" :key="i">
            <span v-if="s.sep" class="sep sub" :style="{ marginLeft: s.m + 'px' }"></span>
            <span v-else class="sub-btn" :class="{ on: s.on }" :style="{ marginLeft: (s.m ?? 0) + 'px' }">
              <svg width="25" height="22" viewBox="0 0 25 22" fill="none" v-html="s.html"></svg>
            </span>
          </template>
        </div>
        <div class="body">
          <div class="blank"></div>
          <div class="dom">
            <div class="dhead"><span>Price</span><span>Trade</span></div>
            <div v-for="r in domRows" :key="r.price" class="drow" :class="{ sepd: r.sep }">
              <span class="price" :class="r.cls"><span class="pv">{{ r.price }}</span></span>
              <span class="trade">
                <span class="tb"><svg width="9" height="6" viewBox="0 0 9 6" fill="none"><path d="M.5 1L4.500 5 8.500 1" stroke="#f0603c" stroke-width="1.400"/></svg></span>
                <span class="tb"><svg width="9" height="6" viewBox="0 0 9 6" fill="none"><path d="M.5 5L4.500 1 8.500 5" stroke="#2b7fd0" stroke-width="1.400"/></svg></span>
              </span>
            </div>
            <div class="dfill"></div>
            <div class="ctrls">
              <div class="grp"><span class="sp">▾</span><span class="inp s"><u>sl</u>0</span><span class="sp">▴</span></div>
              <div class="grp g2"><span class="sp">▾</span><span class="inp v">0.00</span><span class="sp">▴</span></div>
              <div class="grp g3"><span class="sp">▾</span><span class="inp s"><u>tp</u>0</span><span class="sp">▴</span></div>
            </div>
          </div>
          <div class="rgut"></div>
        </div>
      </section>

      <div class="chart">
        <svg width="969" height="932" viewBox="810 56 969 932" class="plot">
          <defs><clipPath id="pa"><rect x="814" y="59" width="916" height="914" /></clipPath></defs>
          <g clip-path="url(#pa)" shape-rendering="crispEdges">
            <path :d="wicks" stroke="#fff" fill="none" />
            <path :d="hollow" stroke="#fff" fill="#000" />
            <path :d="solid" stroke="#fff" fill="#fff" />
            <g v-for="(c, i) in clouds" :key="i" fill="none" :stroke="c.color">
              <path :d="c.cols" stroke-dasharray="3 3" />
              <path :d="c.edge" stroke-dasharray="3 2" />
            </g>
            <path :d="green" stroke="#00ff00" fill="none" />
            <path :d="blue" stroke="#0000ff" fill="none" />
            <path :d="redB" stroke="#ff0000" fill="none" />
            <path :d="redA" stroke="#ff0000" fill="none" />
            <path d="M814 393.500H1730" stroke="#ff0000" />
            <path d="M814 395.500H1730" stroke="#8c9aa8" />
          </g>
          <path d="M813.500 973V58.500H1730V973M813 973.500H1730" fill="none" stroke="#fff" shape-rendering="crispEdges" />
          <path :d="ticks" stroke="#fff" shape-rendering="crispEdges" />
          <g v-for="(t, i) in tags" :key="i">
            <path :d="`M${t.x1} 970V973`" stroke="#fff" />
            <path :d="t.path" :fill="t.c" />
            <text v-if="t.t" :x="t.cx" y="967.500" text-anchor="middle" class="tag" :textLength="t.tl" lengthAdjust="spacingAndGlyphs">{{ t.t }}</text>
          </g>
          <text v-for="l in yLabels" :key="l.t" x="1735" :y="l.y + 4" class="ax" textLength="32" lengthAdjust="spacingAndGlyphs">{{ l.t }}</text>
          <text v-for="l in xLabels" :key="l.t" :x="l.x" y="986.500" class="ax" :textLength="l.w" lengthAdjust="spacingAndGlyphs">{{ l.t }}</text>
          <rect x="1732" y="388" width="39" height="2" fill="#ff0000" />
          <rect x="1732" y="390" width="39" height="11" fill="#7f8e9e" />
          <text x="1735" y="399.500" class="ax dark" textLength="32" lengthAdjust="spacingAndGlyphs">1.09246</text>
          <g shape-rendering="crispEdges">
            <rect x="818.500" y="64.500" width="14" height="10" fill="#fff" stroke="#e8401c" />
            <path d="M825.500 64v11" stroke="#1660b0" stroke-width="1.500" />
            <path d="M820 67.500h4M820 70h4M820 72.500h4" stroke="#e8401c" />
            <path d="M827 67.500h4M827 70h4M827 72.500h4" stroke="#1660b0" />
          </g>
          <text x="838.500" y="73.500" class="ax" textLength="270" lengthAdjust="spacingAndGlyphs">EURUSD_SB, H1:  Euro vs US Dollar, bet in 1 GBP per (0.0001)</text>
        </svg>
      </div>
    </div>
  </div>
</template>

<style>
html, body { margin: 0; background: #f0f0f0; overflow: hidden; }
</style>

<style scoped>
.app { width: 1779px; height: 988px; overflow: hidden; display: flex; flex-direction: column; background: #f0f0f0; color: #1c1c1c;
  font-family: Roboto, "Liberation Sans", sans-serif; font-size: 13px; letter-spacing: -0.3px; }
.menubar { height: 20px; margin-top: 3px; display: flex; align-items: center; position: relative; flex: none; }
.logo { margin-left: 5px; flex: none; }
.menu { text-align: center; flex: none; }
.winctl { margin-left: auto; display: flex; align-items: center; gap: 11px; padding-right: 2px; }
.wmin { width: 9px; height: 1px; background: #b0b0b0; }
.wres { width: 8px; height: 8px; border: 1px solid #b0b0b0; }
.toolbar { height: 30px; border-top: 1px solid #a5a5a5; border-bottom: 2px solid #a0a0a0; display: flex; align-items: center; flex: none; }
.tool { height: 26px; display: flex; align-items: center; justify-content: center; flex: none; box-sizing: border-box; border-radius: 3px; }
.tool.on { background: #cde8ff; box-shadow: inset 0 0 0 1px #99d1ff; }
.txt { color: #1b6cb0; font-size: 13px; }
.txt.dollar { background: #f6c516; border: 1px solid #d89a10; color: #9a6400; height: 22px; font-weight: 700; }
.txt.label { color: #222; white-space: nowrap; }
.txt.label.off { color: #a4a4a4; }
.sep { width: 1px; height: 26px; background: #a0a0a0; flex: none; }
.sep.sub { height: 20px; }
.grip { width: 4px; height: 26px; flex: none; background-image: radial-gradient(#b4b4b4 40%, transparent 45%); background-size: 2px 3px; }
.drop { width: 7px; height: 4px; flex: none; background: #5a4a30; clip-path: polygon(0 0, 100% 0, 50% 100%); }
.tool-right { margin-left: auto; display: flex; align-items: center; }
.userbox { position: relative; width: 30px; height: 26px; display: block; margin-right: 9px; }
.badge { position: absolute; left: 14px; top: -1px; width: 15px; height: 15px; line-height: 15px; border-radius: 50%; background: #e8392c; color: #fff; text-align: center; font-weight: 400; font-size: 13px; }
.lvl { width: 30px; height: 26px; display: flex; flex-direction: column; align-items: center; color: #12a51e; font-size: 10px; line-height: 10px; margin-right: 1px; }
.lvl em { font-style: normal; }
.prog { width: 41px; height: 14px; border: 1px solid #8c8c8c; background: #fff; display: block; }
.prog i { display: block; width: 5px; height: 100%; background: #4cd137; }
.main { flex: 1; display: flex; min-height: 0; }
.left { width: 342px; flex: none; border-right: 1px solid #a0a0a0; padding: 1px 3px 0 3px; display: flex; flex-direction: column; }
.sq { display: inline-block; white-space: nowrap; transform: scaleX(.85); transform-origin: left center; }
.sq.ct { transform: scaleX(.895); }
.sy { transform: scaleX(.87); }
.dg { transform: scaleX(.84); transform-origin: right center; }
.lt { letter-spacing: -0.42px; }
.title { height: 13px; line-height: 12px; padding-left: 2px; position: relative; flex: none; color: #222; margin-right: 13px; }
.title .x { position: absolute; right: -13px; top: 0; width: 13px; text-align: center; font-weight: 700; font-size: 13px; color: #111; }
.pale { background: linear-gradient(90deg, #c2d2e5, #d9e4f1); }
.deep { background: linear-gradient(90deg, #8eadd4, #b7cce6); }
.mw { margin-top: 1px; border-top: 1px solid #a0a0a0; border-left: 1px solid #a0a0a0; height: 508px; display: flex; flex-direction: column; flex: none; background: #fff; border-bottom: 1px solid #a5a5a5; margin-bottom: 3px; box-sizing: border-box; }
.row { display: grid; grid-template-columns: 135px 69px 67.500px 69.500px; flex: none; }
.head { height: 24px; line-height: 25px; background: #fff; }
.head span { border-right: 1px solid #eaeaea; }
.head .num { padding-right: 5px; }
.hsym { padding-left: 6px; }
.data { height: 20px; line-height: 20px; box-sizing: border-box; border-bottom: 1px solid rgba(130,130,130,.35); grid-template-rows: 19px; }
.data > span { border-right: 1px solid rgba(130,130,130,.35); }
.sym { display: flex; align-items: center; padding-left: 6px; }
.dir { margin-right: 6px; flex: none; }
.num { text-align: right; padding-right: 3px; white-space: nowrap; }
.addrow { height: 20px; display: flex; align-items: center; padding-left: 4px; color: #808080; flex: none; letter-spacing: -0.45px; }
.add { margin-left: 7px; }
.count { margin-left: auto; padding-right: 4px; }
.fill { flex: 1; }
.tabs { height: 20px; border-top: 1px solid #111; background: #f0f0f0; display: flex; color: #808080; flex: none; line-height: 20px; margin-bottom: 3px; }
.tab { height: 20px; box-sizing: border-box; flex: none; }
.tab.active { color: #222; background: #fff; border: 1px solid #111; border-top: 0; border-bottom-width: 2px; margin-left: 1px; padding-left: 10px; width: 66px; line-height: 19px; }
.tab.t2 { width: 55px; padding-left: 9px; }
.tab.t3 { width: 60px; padding-left: 9px; }
.tab.t4 { padding-left: 9px; }
.tab.t2, .tab.t3 { border-right: 1px solid #777; height: 14px; line-height: 14px; margin-top: 3px; }
.nav { height: 14px; line-height: 13px; }
.navbox { border-top: 1px solid #a0a0a0; margin-left: 1px; flex: 1; min-height: 0; display: flex; overflow: hidden; }
.tree { width: 325px; background-color: #fff; flex: none; height: 400px;
  background-image: linear-gradient(#8a8a8a 50%, transparent 50%), linear-gradient(#8a8a8a 50%, transparent 50%);
  background-size: 1px 2px, 1px 2px; background-position: 12px 0, 33px 0; background-repeat: repeat-y; }
.leaf { height: 20px; display: flex; align-items: center; position: relative; padding-left: 69px; white-space: nowrap; line-height: 18px; }
.leaf .lt { margin-top: -2px; }
.leaf::before { content: ""; position: absolute; left: 54px; top: 0; bottom: 0; width: 1px; background: linear-gradient(#8a8a8a 50%, transparent 50%) 0 0 / 1px 2px; }
.leaf.last::before { bottom: 10px; }
.leaf::after { content: ""; position: absolute; left: 55px; top: 10px; width: 12px; height: 1px; background: linear-gradient(90deg, #8a8a8a 50%, transparent 50%) 0 0 / 2px 1px; }
.ind { margin-right: 6px; flex: none; }
.folder { height: 20px; display: flex; align-items: center; padding-left: 29px; position: relative; line-height: 18px; }
.folder .lt { margin-top: -2px; }
.minus { width: 8px; height: 8px; border: 1px solid #8a8a8a; background: linear-gradient(#333,#333) center / 5px 1px no-repeat, #f2f2f2; margin-right: 9px; flex: none; }
.ftext { margin-left: 5px; }
.scroll { width: 16px; background: #f0f0f0; flex: none; padding-top: 87px; display: flex; justify-content: center; }
.scroll i { width: 2px; height: 260px; background: #8a8a8a; display: block; }
.center { flex: 1; min-width: 0; margin-left: 5px; border-left: 1px solid #a0a0a0; padding-top: 1px; display: flex; flex-direction: column; }
.center .title { margin-right: 19px; }
.center .title .x { right: -15px; }
.subbar { height: 26px; margin-top: 2px; border-bottom: 1px solid #a0a0a0; display: flex; align-items: flex-start; padding-left: 2px; flex: none; }
.sub-btn { width: 25px; height: 22px; display: flex; flex: none; border-radius: 3px; }
.sub-btn.on { background: #cde8ff; box-shadow: inset 0 0 0 1px #99d1ff; }
.body { flex: 1; min-height: 0; display: flex; }
.blank { width: 226px; background: #fff; border-right: 1px solid #a0a0a0; flex: none; }
.dom { width: 223px; background: #fff; flex: none; display: flex; flex-direction: column; }
.rgut { flex: 1; background: #f0f0f0; }
.dhead { height: 25px; display: grid; grid-template-columns: 112.500px 110.500px; text-align: center; line-height: 26px; flex: none; }
.dhead span:first-child { border-right: 1px solid #eaeaea; }
.drow { height: 20px; display: grid; grid-template-columns: 112.500px 110.500px; grid-template-rows: 19px; flex: none; box-sizing: border-box; border-bottom: 1px solid #c4c4c4; }
.drow.sepd { border-bottom: 1px solid #111; }
.price { text-align: center; line-height: 20px; height: 19px; border-right: 1px solid #c4c4c4; color: #222; }
.pv { display: inline-block; transform: scaleX(.88); height: 19px; }
.price.ask { background: #fbe1fb; }
.price.mid { background: #fff; }
.price.bid { background: #d2e1fa; }
.trade { display: flex; justify-content: space-between; padding: 0 0 0 1px; }
.tb { width: 17px; height: 18px; border: 1px solid #cacaca; box-sizing: border-box; display: flex; align-items: center; justify-content: center; background: #fff; }
.dfill { flex: 1; }
.ctrls { height: 19px; display: flex; background: #f0f0f0; padding-left: 1px; gap: 1.500px; flex: none; color: #222; box-sizing: border-box; }
.grp { width: 72.500px; display: grid; grid-template-columns: 19.500px 1fr 19px; background: #e4e4e4; }
.grp.g2 { width: 74.500px; }
.grp.g3 { width: 72px; }
.sp { text-align: center; font-size: 11px; line-height: 19px; color: #111; }
.inp { background: #fff; border: 1px solid #a8a8a8; border-bottom: 0; box-sizing: border-box; text-align: right; padding: 0 5px 0 2px; line-height: 18px; display: flex; justify-content: space-between; }
.inp.v { justify-content: center; padding: 0; }
.inp u { text-decoration: none; color: #888; }
.chart { width: 969px; flex: none; background: #000; height: 932px; overflow: hidden; }
.plot { display: block; }
.ax { fill: #fff; font: 12px Roboto, sans-serif; white-space: pre; letter-spacing: 0; }
.ax.dark { fill: #111; }
.tag { fill: #111; font: 12px Roboto, sans-serif; letter-spacing: 0; }
</style>
